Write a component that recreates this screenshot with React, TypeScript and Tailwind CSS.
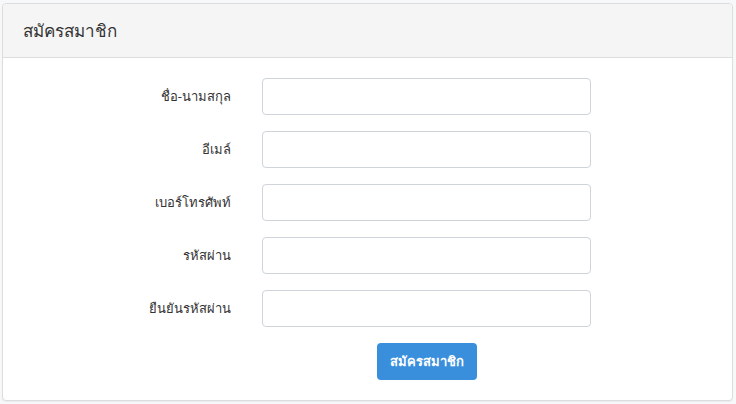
const fields = [
  { label: "ชื่อ-นามสกุล", type: "text" },
  { label: "อีเมล์", type: "email" },
  { label: "เบอร์โทรศัพท์", type: "text" },
  { label: "รหัสผ่าน", type: "password" },
  { label: "ยืนยันรหัสผ่าน", type: "password" },
];

export default function App() {
  return (
    <div className="w-[736px] h-[404px] bg-[#f7f8fa] pt-[3px] pl-[2px] font-['Noto_Sans',sans-serif]">
      <div className="w-[731px] h-[398px] bg-white border border-[#dddddd] rounded-[4px] shadow-[0_1px_1px_rgba(0,0,0,0.05)]">
        {/* Panel heading */}
        <div className="h-[54px] bg-[#f5f5f5] border-b border-[#dddddd] rounded-t-[4px] px-5 flex items-center">
          <h3 className="text-[17px] text-[#333333] leading-none">สมัครสมาชิก</h3>
        </div>

        {/* Form */}
        <form className="pt-5 flex flex-col gap-4">
          {fields.map((f) => (
            <div key={f.label} className="flex items-center">
              <label className="w-[228px] text-right text-[13px] text-[#333333] pr-0">{f.label}</label>
              <input
                type={f.type}
                className="ml-[31px] w-[329px] h-[37px] border border-[#cfd4da] rounded-[4px] bg-white px-3 text-[13px] outline-none"
              />
            </div>
          ))}
          <div className="flex pl-[374px]">
            <button
              type="button"
              className="w-[100px] h-[37px] rounded-[4px] bg-[#3a8fdd] text-white text-[13px] font-bold"
            >
              สมัครสมาชิก
            </button>
          </div>
        </form>
      </div>
    </div>
  );
}
